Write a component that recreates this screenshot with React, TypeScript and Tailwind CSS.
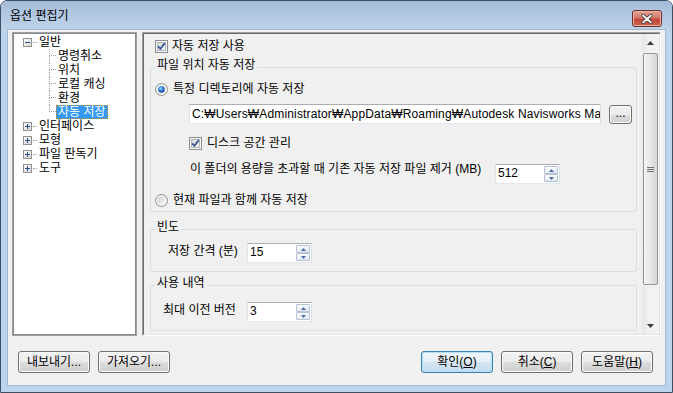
import React from 'react';

const FONT = "font-['Liberation_Sans','Noto_Sans_CJK_KR',sans-serif]";
const LINE = 'border-dotted border-[#a0a0a0]';

function Expander({ open }: { open?: boolean }) {
  return (
    <svg width="9" height="9" viewBox="0 0 9 9" className="shrink-0">
      <defs>
        <linearGradient id="exg" x1="0" y1="0" x2="1" y2="1">
          <stop offset="0" stopColor="#ffffff" />
          <stop offset="1" stopColor="#d4d4d4" />
        </linearGradient>
      </defs>
      <rect x="0.5" y="0.5" width="8" height="8" fill="url(#exg)" stroke="#919191" />
      <path d="M2 4.5h5" stroke="#2d4c8a" />
      {!open && <path d="M4.5 2v5" stroke="#2d4c8a" />}
    </svg>
  );
}

function RootRow({ label, open }: { label: string; open?: boolean }) {
  return (
    <div className="flex h-[14px] items-center">
      <div className="w-[9px] shrink-0" />
      <Expander open={open} />
      <div className={`ml-[1px] w-[4px] border-t ${LINE}`} />
      <span className="ml-[2px] whitespace-nowrap">{label}</span>
    </div>
  );
}

function ChildRow({ label, last, selected }: { label: string; last?: boolean; selected?: boolean }) {
  return (
    <div className="flex h-[14px]">
      <div className="w-[35px] shrink-0" />
      <div className="flex w-[7px] shrink-0 flex-col">
        <div className={`h-[7px] border-b border-l ${LINE}`} />
        <div className={last ? 'h-[7px]' : `h-[7px] border-l ${LINE}`} />
      </div>
      {selected ? (
        <span className="whitespace-nowrap border border-dotted border-[#c98a2e] bg-[#3399ff] px-[1px] leading-[12px] text-white">
          {label}
        </span>
      ) : (
        <span className="whitespace-nowrap px-[2px]">{label}</span>
      )}
    </div>
  );
}

function CheckBox() {
  return (
    <svg width="13" height="13" viewBox="0 0 13 13" className="shrink-0">
      <defs>
        <linearGradient id="cbg" x1="0" y1="0" x2="1" y2="1">
          <stop offset="0" stopColor="#d6d6d6" />
          <stop offset="1" stopColor="#fafafa" />
        </linearGradient>
      </defs>
      <rect x="0.5" y="0.5" width="12" height="12" fill="#f6f6f6" stroke="#8e8f8f" />
      <rect x="2.5" y="2.5" width="8" height="8" fill="url(#cbg)" stroke="#b2b6bb" />
      <path d="M3.2 6.3 L5.4 8.8 L9.8 3.2" fill="none" stroke="#3f5c99" strokeWidth="1.9" />
    </svg>
  );
}

function Radio({ checked }: { checked?: boolean }) {
  return (
    <svg width="13" height="13" viewBox="0 0 13 13" className="shrink-0">
      <defs>
        <linearGradient id="rbg" x1="0" y1="0" x2="1" y2="1">
          <stop offset="0" stopColor="#cfcfcf" />
          <stop offset="1" stopColor="#fbfbfb" />
        </linearGradient>
        <radialGradient id="rdot" cx="0.4" cy="0.35" r="0.65">
          <stop offset="0" stopColor="#a8e2ff" />
          <stop offset="0.45" stopColor="#2c8ee0" />
          <stop offset="1" stopColor="#163f86" />
        </radialGradient>
      </defs>
      <circle cx="6.5" cy="6.5" r="6" fill="#f4f4f4" stroke="#8e8f8f" />
      <circle cx="6.5" cy="6.5" r="4.3" fill="url(#rbg)" />
      {checked && <circle cx="6.5" cy="6.5" r="3.2" fill="url(#rdot)" />}
    </svg>
  );
}

function Arrow({ up, color = '#4b6ca6', w = 5, h = 3 }: { up?: boolean; color?: string; w?: number; h?: number }) {
  return (
    <svg width={w} height={h} viewBox={`0 0 ${w} ${h}`}>
      <polygon points={up ? `0,${h} ${w},${h} ${w / 2},0` : `0,0 ${w},0 ${w / 2},${h}`} fill={color} />
    </svg>
  );
}

function SpinBtn({ up }: { up?: boolean }) {
  return (
    <div className="flex flex-1 items-center justify-center rounded-[1px] border border-[#b6c2d3] bg-gradient-to-b from-[#fbfcfd] to-[#e3e9f1]">
      <Arrow up={up} />
    </div>
  );
}

function Spin({ value }: { value: string }) {
  return (
    <div className="flex h-[20px] w-[65px] shrink-0 border border-[#abadb3] border-b-[#e3e9ef] border-l-[#e2e3ea] border-r-[#dbdfe6] bg-white">
      <span className="flex-1 pl-[2px] pt-[1px] font-['Liberation_Sans',sans-serif] leading-[14px]">{value}</span>
      <div className="my-[1px] mr-[1px] flex w-[14px] flex-col">
        <SpinBtn up />
        <SpinBtn />
      </div>
    </div>
  );
}

function Button({ children, def, className = 'h-[22px] w-[72px]' }: { children: React.ReactNode; def?: boolean; className?: string }) {
  return (
    <div
      className={`${className} flex shrink-0 items-center justify-center rounded-[3px] border ${
        def
          ? 'border-[#3c7fb1] bg-[linear-gradient(to_bottom,#f0f7fc_0%,#e4eff8_50%,#d4e6f3_51%,#c3dcee_100%)] shadow-[inset_0_0_0_1px_#b4e0f7]'
          : 'border-[#707070] bg-[linear-gradient(to_bottom,#f2f2f2_0%,#ebebeb_50%,#dddddd_51%,#cfcfcf_100%)] shadow-[inset_0_0_0_1px_#fbfbfb]'
      } whitespace-nowrap`}
    >
      {children}
    </div>
  );
}

function Group({ title, children, className = '' }: { title: string; children: React.ReactNode; className?: string }) {
  return (
    <fieldset className={`rounded-[3px] border border-[#d5dfe5] px-[4px] ${className}`}>
      <legend className="px-[2px] pb-[4px] leading-[14px]">{title}</legend>
      {children}
    </fieldset>
  );
}

function ScrollBar() {
  return (
    <div className="flex w-[17px] shrink-0 flex-col bg-gradient-to-r from-[#e6e6e6] via-[#f2f2f2] to-[#f2f2f2]">
      <div className="flex h-[17px] items-center justify-center">
        <Arrow up color="#3c3c3c" w={7} h={4} />
      </div>
      <div className="flex flex-1 flex-col px-[1px] pt-[2px]">
        <div className="flex h-[232px] items-center justify-center rounded-[2px] border border-[#979797] bg-gradient-to-r from-[#f4f4f4] via-[#e8e8e8] to-[#d5d5d5]">
          <div className="flex flex-col gap-[1px]">
            <div className="h-[1px] w-[7px] bg-[#707070]" />
            <div className="h-[1px] w-[7px] bg-[#707070]" />
            <div className="h-[1px] w-[7px] bg-[#707070]" />
          </div>
        </div>
      </div>
      <div className="flex h-[17px] items-center justify-center">
        <Arrow color="#3c3c3c" w={7} h={4} />
      </div>
    </div>
  );
}

export default function App() {
  return (
    <div className={`${FONT} h-[393px] w-[673px] overflow-hidden rounded-t-[7px] border border-[#3e4f64] bg-[#bcd3ec] text-[12px] leading-[14px] text-black`}>
      {/* title bar */}
      <div className="flex h-[29px] bg-gradient-to-b from-[#a5bcd9] to-[#bfd3ea] pl-[9px] pr-[10px]">
        <span className="self-center">옵션 편집기</span>
        <div className="ml-auto mt-[9px] flex h-[17px] w-[30px] items-center justify-center rounded-[3px] border border-[#6b2c25] bg-[linear-gradient(to_bottom,#e3a196_0%,#d4776a_45%,#c2473a_55%,#cc5f4c_100%)] shadow-[inset_0_0_0_1px_#ecb3a9]">
          <svg width="12" height="10" viewBox="0 0 12 10">
            <path d="M2.2 1.6 L9.8 8.4 M9.8 1.6 L2.2 8.4" stroke="#3b3b3b" strokeWidth="3.4" strokeLinecap="round" />
            <path d="M2.2 1.6 L9.8 8.4 M9.8 1.6 L2.2 8.4" stroke="#ffffff" strokeWidth="1.9" strokeLinecap="round" />
          </svg>
        </div>
      </div>

      {/* client area */}
      <div className="mx-[7px] flex h-[355px] flex-col bg-[#f0f0f0] shadow-[0_0_0_1px_#a3b8d0]">
        <div className="ml-[4px] mt-[2px] flex h-[304px]">
          {/* tree */}
          <div className="w-[125px] shrink-0 border border-[#a0a0a0]">
            <div className="h-full border border-[#828790] bg-white pt-[1px]">
              <RootRow label="일반" open />
              <ChildRow label="명령취소" />
              <ChildRow label="위치" />
              <ChildRow label="로컬 캐싱" />
              <ChildRow label="환경" />
              <ChildRow label="자동 저장" last selected />
              <RootRow label="인터페이스" />
              <RootRow label="모형" />
              <RootRow label="파일 판독기" />
              <RootRow label="도구" />
            </div>
          </div>

          {/* options page */}
          <div className="ml-[5px] flex w-[519px] border border-b-white border-l-[#a0a0a0] border-r-white border-t-[#a0a0a0]">
            <div className="flex flex-1 border border-b-[#e3e3e3] border-l-[#696969] border-r-[#e3e3e3] border-t-[#696969]">
              <div className="flex-1 overflow-hidden pl-[6px] pr-[5px] pt-[5px]">
                <div className="ml-[5px] flex h-[14px] items-center gap-[4px]">
                  <CheckBox />
                  <span>자동 저장 사용</span>
                </div>

                <Group title="파일 위치 자동 저장" className="mt-[5px] pb-[4px]">
                  <div className="mt-[6px] flex h-[14px] items-center gap-[5px]">
                    <Radio checked />
                    <span>특정 디렉토리에 자동 저장</span>
                  </div>
                  <div className="ml-[34px] mt-[8px] flex items-center gap-[8px]">
                    <div className="h-[20px] w-[412px] overflow-hidden whitespace-nowrap border border-[#abadb3] border-b-[#e3e9ef] border-l-[#e2e3ea] border-r-[#dbdfe6] bg-white pl-[2px] pt-[2px] font-['Liberation_Sans',sans-serif] tracking-[0.15px]">
                      C:₩Users₩Administrator₩AppData₩Roaming₩Autodesk Navisworks Ma
                    </div>
                    <Button className="h-[19px] w-[23px]">
                      <span className="-mt-[3px] font-['Liberation_Sans',sans-serif]">...</span>
                    </Button>
                  </div>
                  <div className="ml-[34px] mt-[12px] flex h-[14px] items-center gap-[5px]">
                    <CheckBox />
                    <span>디스크 공간 관리</span>
                  </div>
                  <div className="ml-[35px] mt-[12px] flex items-start">
                    <span className="w-[305px] shrink-0 whitespace-nowrap">이 폴더의 용량을 초과할 때 기존 자동 저장 파일 제거 (MB)</span>
                    <div className="mt-[2px]">
                      <Spin value="512" />
                    </div>
                  </div>
                  <div className="mt-[9px] flex h-[14px] items-center gap-[5px]">
                    <Radio />
                    <span>현재 파일과 함께 자동 저장</span>
                  </div>
                </Group>

                <Group title="빈도" className="mt-[8px] pb-[8px]">
                  <div className="ml-[13px] mt-[5px] flex items-start">
                    <span className="mt-[1px] w-[79px] shrink-0 whitespace-nowrap">저장 간격 (분)</span>
                    <Spin value="15" />
                  </div>
                </Group>

                <Group title="사용 내역" className="mt-[4px] pb-[8px]">
                  <div className="ml-[8px] mt-[8px] flex items-start">
                    <span className="mt-[1px] w-[84px] shrink-0 whitespace-nowrap">최대 이전 버전</span>
                    <Spin value="3" />
                  </div>
                </Group>
              </div>
              <ScrollBar />
            </div>
          </div>
        </div>

        {/* dialog buttons */}
        <div className="mt-[15px] flex pl-[10px] pr-[12px]">
          <Button>내보내기...</Button>
          <Button className="ml-[8px] h-[22px] w-[72px]">가져오기...</Button>
          <div className="flex-1" />
          <Button def>
            확인(<span className="underline">O</span>)
          </Button>
          <Button className="ml-[8px] h-[22px] w-[72px]">
            취소(<span className="underline">C</span>)
          </Button>
          <Button className="ml-[8px] h-[22px] w-[72px]">
            도움말(<span className="underline">H</span>)
          </Button>
        </div>
      </div>
    </div>
  );
}
